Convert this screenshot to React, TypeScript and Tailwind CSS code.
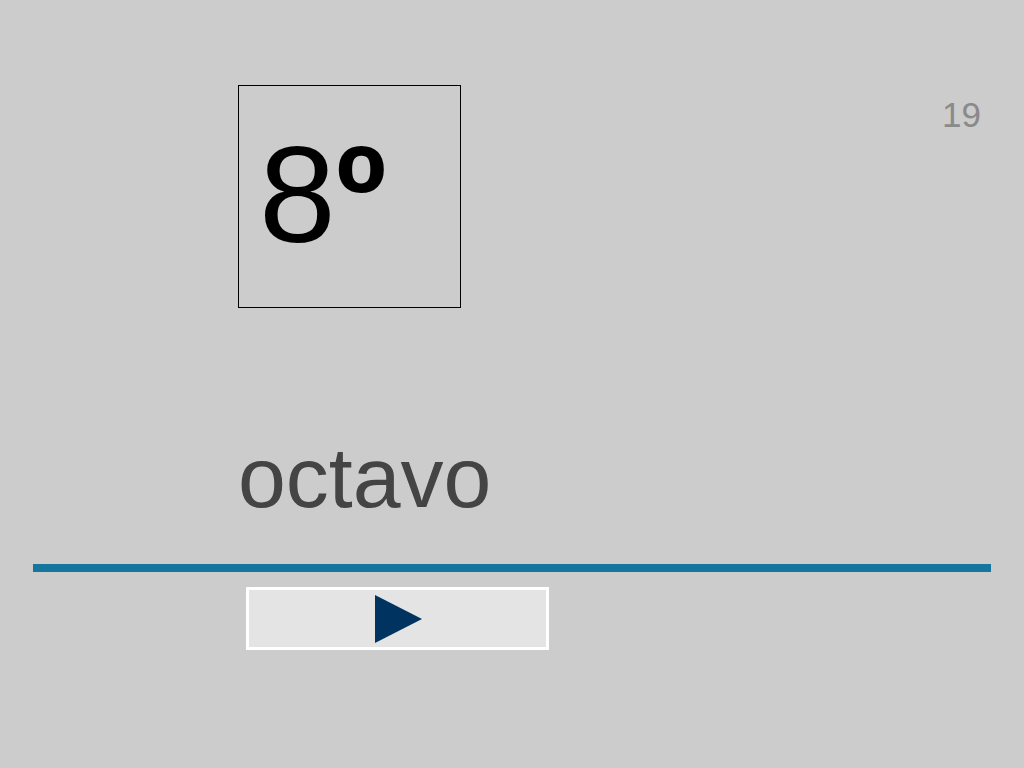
import React from "react";

function App() {
  return (
    <div className="w-[1024px] h-[768px] bg-[#cccccc] flex flex-col font-['Liberation_Sans',Arial,sans-serif]">
      <div className="flex justify-between pt-[85px] pl-[238px] pr-[43px]">
        <div className="w-[223px] h-[223px] border border-black pl-[20px] pt-[39px]">
          <span className="text-[138px] leading-none text-black">
            8<span className="font-bold">º</span>
          </span>
        </div>
        <div className="mt-[12px] text-[35px] leading-none text-[#8a8a8a]">19</div>
      </div>

      <div className="pl-[238px] mt-[126px] text-[86px] leading-none text-[#444444]">octavo</div>

      <div className="mx-[33px] mt-[44px] h-[8px] bg-[#15759c]" />

      <div className="pl-[246px] mt-[15px]">
        <button className="w-[303px] h-[63px] border-[3px] border-white bg-[#e4e4e4] flex items-center justify-center">
          <svg width="48" height="48" viewBox="0 0 48 48" className="ml-[2px]">
            <polygon points="0,0 47,24 0,48" fill="#00335f" />
          </svg>
        </button>
      </div>
    </div>
  );
}

export default App;
